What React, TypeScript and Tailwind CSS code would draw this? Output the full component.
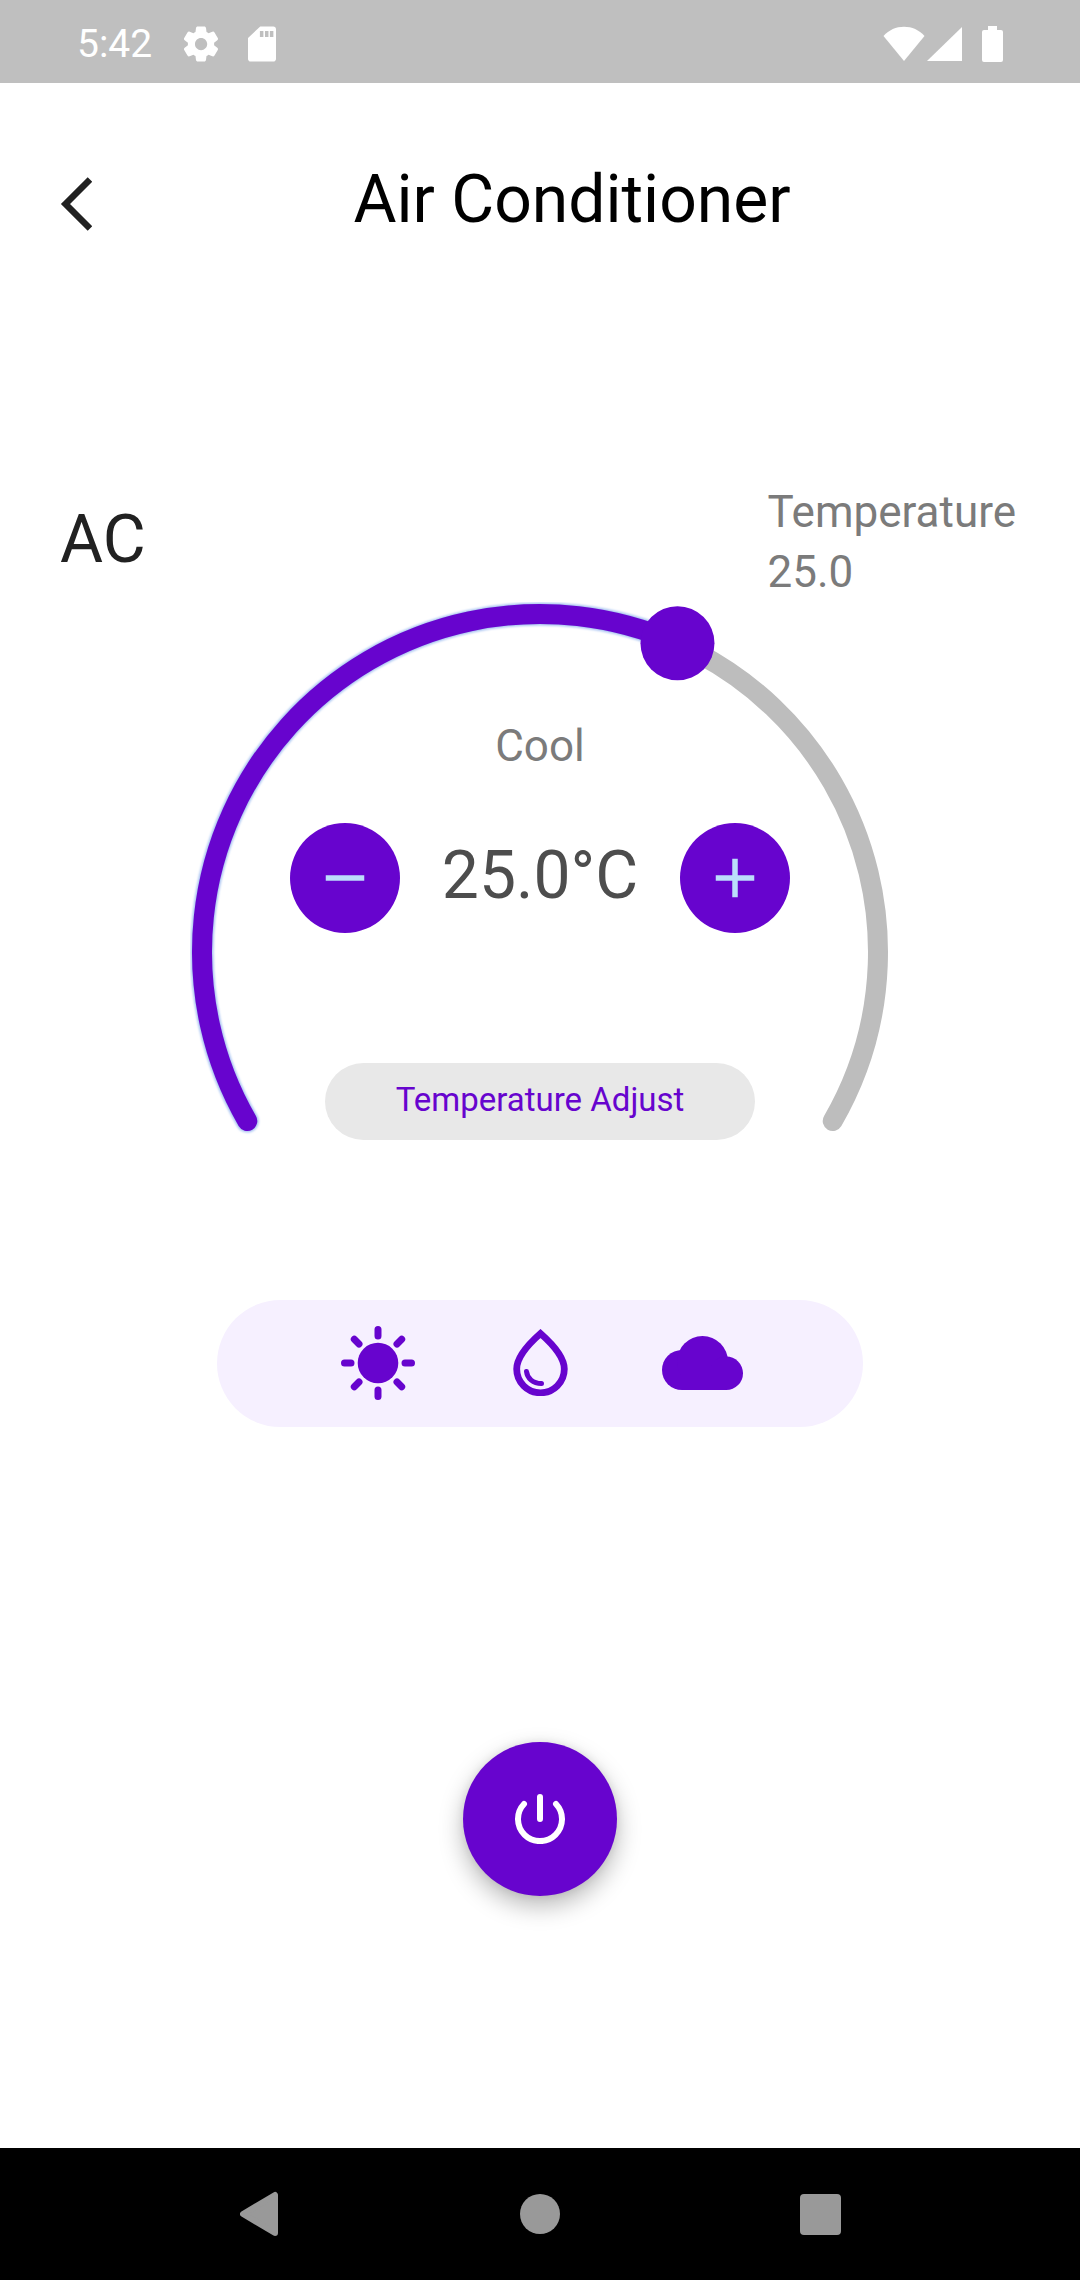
import { useState } from "react";

const MIN_TEMP = 16;
const MAX_TEMP = 31;
const RADIUS = 338;
const CENTER = 350;
const SWEEP = 240;

/** Point on the dial; 0 degrees is the top, growing clockwise. */
function dialPoint(degrees: number) {
  const a = (degrees * Math.PI) / 180;
  return { x: CENTER + RADIUS * Math.sin(a), y: CENTER - RADIUS * Math.cos(a) };
}

function arcPath(from: number, to: number) {
  const s = dialPoint(from);
  const e = dialPoint(to);
  return `M${s.x} ${s.y}A${RADIUS} ${RADIUS} 0 ${to - from > 180 ? 1 : 0} 1 ${e.x} ${e.y}`;
}

function StatusBar() {
  return (
    <div className="flex h-[83px] items-center justify-between bg-[#bfbfbf] pt-1 pr-[77px] pl-[77px] text-white">
      <div className="flex items-center">
        <span className="text-[39px] leading-[46px]">5:42</span>
        <svg className="ml-7 size-[42px]" viewBox="0 0 24 24" fill="currentColor" aria-hidden="true">
          <path d="M19.5 12c0-.23-.01-.45-.03-.68l1.86-1.41c.4-.3.51-.86.26-1.3l-1.87-3.23a.987.987 0 0 0-1.25-.42l-2.15.91c-.37-.26-.76-.49-1.17-.68l-.29-2.31c-.06-.5-.49-.88-.99-.88h-3.73c-.51 0-.94.38-1 .88l-.29 2.31c-.41.19-.8.42-1.17.68l-2.15-.91c-.46-.2-1-.02-1.25.42L2.41 8.62c-.25.44-.14.99.26 1.3l1.86 1.41a7.343 7.343 0 0 0 0 1.35l-1.86 1.41c-.4.3-.51.86-.26 1.3l1.87 3.23c.25.44.79.62 1.25.42l2.15-.91c.37.26.76.49 1.17.68l.29 2.31c.06.5.49.88.99.88h3.73c.5 0 .93-.38.99-.88l.29-2.31c.41-.19.8-.42 1.17-.68l2.15.91c.46.2 1 .02 1.25-.42l1.87-3.23c.25-.44.14-.99-.26-1.3l-1.86-1.41c.03-.23.04-.45.04-.68zm-7.46 3.5c-1.93 0-3.5-1.57-3.5-3.5s1.57-3.5 3.5-3.5 3.5 1.57 3.5 3.5-1.57 3.5-3.5 3.5z" />
        </svg>
        <svg className="ml-[19px] size-[42px]" viewBox="0 0 24 24" fill="currentColor" aria-hidden="true">
          <path d="M18.500 2H11L4 8.500V20.500C4 21.300 4.700 22 5.500 22h13c.8 0 1.500-.7 1.500-1.500v-17c0-.8-.7-1.500-1.500-1.500zM12.800 8h-2V4.500h2zm2.900 0h-2V4.500h2zm2.800 0h-2V4.500h2z" />
        </svg>
      </div>
      <div className="flex items-center">
        <svg className="h-9 w-[42px]" viewBox="0 0 42 36" fill="currentColor" aria-hidden="true">
          <path d="M21 35 .5 10C6 4 13 .8 21 .8S36 4 41.500 10z" />
        </svg>
        <svg className="ml-[2px] size-9" viewBox="0 0 36 36" fill="currentColor" aria-hidden="true">
          <path d="M0 35 35 1v34z" />
        </svg>
        <svg className="ml-[19px] h-9 w-[21px]" viewBox="0 0 21 36" fill="currentColor" aria-hidden="true">
          <path d="M6 0h9v4h4a2 2 0 0 1 2 2v28a2 2 0 0 1-2 2H2a2 2 0 0 1-2-2V6a2 2 0 0 1 2-2h4z" />
        </svg>
      </div>
    </div>
  );
}

function SunIcon() {
  return (
    <svg className="size-[74px]" viewBox="-37 -37 74 74" fill="none" stroke="currentColor" strokeWidth="7" strokeLinecap="round" aria-hidden="true">
      <circle r="20.300" fill="currentColor" stroke="none" />
      <path d="M0-33.500v6.500M0 27v6.500M-33.500 0h6.500M27 0h6.500M-23.700-23.700l4.700 4.700M19-19l4.700-4.700M19 19l4.700 4.700M-23.700 23.700l4.700-4.700" />
    </svg>
  );
}

function DropIcon() {
  return (
    <svg className="h-[67px] w-[55px]" viewBox="0 0 55 67" fill="none" stroke="currentColor" aria-hidden="true">
      <path strokeWidth="6.800" d="M27.500 4.500C19 12 3.700 27 3.700 40a23.800 23.800 0 0 0 47.600 0C51.300 27 36 12 27.500 4.500z" />
      <path strokeWidth="5" strokeLinecap="round" d="M13.500 42.500c.8 7 6.500 12 15 12" />
    </svg>
  );
}

function CloudIcon() {
  return (
    <svg className="h-[54px] w-[81px]" viewBox="0 0 81 54" fill="currentColor" aria-hidden="true">
      <circle cx="20" cy="34" r="20" />
      <circle cx="40.500" cy="25.500" r="25.500" />
      <circle cx="64.300" cy="37.300" r="16.700" />
      <path d="M20 30h44v24H20z" />
    </svg>
  );
}

const MODES = [
  { name: "Sun", Icon: SunIcon },
  { name: "Humidity", Icon: DropIcon },
  { name: "Cloud", Icon: CloudIcon },
];

function Dial({ temp, onChange }: { temp: number; onChange: (t: number) => void }) {
  const angle = -SWEEP / 2 + ((temp - MIN_TEMP) / (MAX_TEMP - MIN_TEMP)) * SWEEP;
  const knob = dialPoint(angle);
  const step = (d: number) => onChange(Math.min(MAX_TEMP, Math.max(MIN_TEMP, temp + d)));
  const round =
    "flex size-[110px] shrink-0 items-center justify-center rounded-full bg-[#6704ce] text-[#bbdefb]";

  return (
    <section className="mx-auto grid w-full max-w-[700px]">
      <svg className="col-start-1 row-start-1 w-full" viewBox="0 0 700 540" fill="none" strokeLinecap="round" aria-hidden="true">
        <defs>
          <filter id="halo" x="-5%" y="-5%" width="110%" height="110%">
            <feGaussianBlur stdDeviation="1" />
          </filter>
        </defs>
        <path d={arcPath(-SWEEP / 2, SWEEP / 2)} stroke="#bdbdbd" strokeWidth="20" />
        <path d={arcPath(-SWEEP / 2, angle)} stroke="#a9c4f2" strokeWidth="23" filter="url(#halo)" />
        <path d={arcPath(-SWEEP / 2, angle)} stroke="#6704ce" strokeWidth="20" />
        <circle cx={knob.x} cy={knob.y} r="37" fill="#6704ce" />
      </svg>
      <div className="relative col-start-1 row-start-1 flex flex-col items-center pt-[114px]">
        <input
          className="sr-only"
          type="range"
          aria-label="Target temperature"
          min={MIN_TEMP}
          max={MAX_TEMP}
          value={temp}
          onChange={(e) => onChange(Number(e.target.value))}
        />
        <p className="text-[44px] leading-[60px] text-[#7b7b7b]">Cool</p>
        <div className="mt-[47px] flex w-full max-w-[500px] items-center justify-between">
          <button type="button" aria-label="Decrease temperature" className={round} onClick={() => step(-1)}>
            <svg className="size-[66px]" viewBox="0 0 24 24" fill="currentColor" aria-hidden="true">
              <path d="M19 13H5v-2h14v2z" />
            </svg>
          </button>
          <p className="pb-1 text-[66px] leading-[80px] text-[#4d4d4d]">{temp.toFixed(1)}°C</p>
          <button type="button" aria-label="Increase temperature" className={round} onClick={() => step(1)}>
            <svg className="size-[66px]" viewBox="0 0 24 24" fill="currentColor" aria-hidden="true">
              <path d="M19 13h-6v6h-2v-6H5v-2h6V5h2v6h6v2z" />
            </svg>
          </button>
        </div>
        <button
          type="button"
          className="mt-[130px] flex h-[77px] w-full max-w-[430px] items-center justify-center rounded-full bg-[#e8e8e8] pb-1 text-[33px] leading-[40px] text-[#6704ce]"
        >
          Temperature Adjust
        </button>
      </div>
    </section>
  );
}

export default function App() {
  const [temp, setTemp] = useState(25);

  return (
    <div className="flex min-h-screen flex-col bg-white font-[Roboto,sans-serif]">
      <StatusBar />
      <header className="flex items-end pt-[77px] pr-7 pl-[60px]">
        <button type="button" aria-label="Back" className="text-[#212121]">
          <svg className="h-[72px] w-8" viewBox="0 0 32 72" fill="none" stroke="currentColor" strokeWidth="6.500" aria-hidden="true">
            <path d="M30 11.500 5.500 36 30 60.500" />
          </svg>
        </button>
        <h1 className="flex-1 text-center text-[66px] leading-[80px] text-black">Air Conditioner</h1>
      </header>
      <main className="flex flex-1 flex-col items-center">
        <div className="mt-[242px] flex w-full items-center justify-between pr-16 pl-[60px]">
          <h2 className="pb-1 text-[66px] leading-[80px] text-[#212121]">AC</h2>
          <p className="text-[44px] leading-[60px] text-[#7b7b7b]">
            Temperature
            <br />
            {temp.toFixed(1)}
          </p>
        </div>
        <Dial temp={temp} onChange={setTemp} />
        <div className="mt-[158px] grid h-[127px] w-full max-w-[646px] grid-cols-3 rounded-full bg-[#f6f0ff] px-20 pb-[2px] text-[#6704ce]">
          {MODES.map(({ name, Icon }) => (
            <button key={name} type="button" aria-label={name} className="flex items-center justify-center">
              <Icon />
            </button>
          ))}
        </div>
        <button
          type="button"
          aria-label="Power"
          className="mt-[315px] mb-16 flex size-[154px] items-center justify-center rounded-full bg-[#6704ce] text-white shadow-[0_10px_24px_rgba(0,0,0,0.28),0_0_8px_rgba(0,0,0,0.08)]"
        >
          <svg className="size-[50px]" viewBox="-25 -25 50 50" fill="none" stroke="currentColor" strokeWidth="6" strokeLinecap="round" aria-hidden="true">
            <path d="M0-22V0M-16-15A22 22 0 1 0 16-15" />
          </svg>
        </button>
      </main>
      <nav className="grid h-[132px] shrink-0 grid-cols-3 bg-black px-[120px] text-[#999999]">
        <button type="button" aria-label="Navigate back" className="flex items-center justify-center">
          <svg className="h-[46px] w-10" viewBox="0 0 40 46" fill="currentColor" stroke="currentColor" strokeWidth="6" strokeLinejoin="round" aria-hidden="true">
            <path d="M3 23 35 4v38z" />
          </svg>
        </button>
        <button type="button" aria-label="Home" className="flex items-center justify-center">
          <span className="size-10 rounded-full bg-[#999999]" />
        </button>
        <button type="button" aria-label="Recent apps" className="flex items-center justify-center">
          <span className="size-[41px] rounded-[4px] bg-[#999999]" />
        </button>
      </nav>
    </div>
  );
}
